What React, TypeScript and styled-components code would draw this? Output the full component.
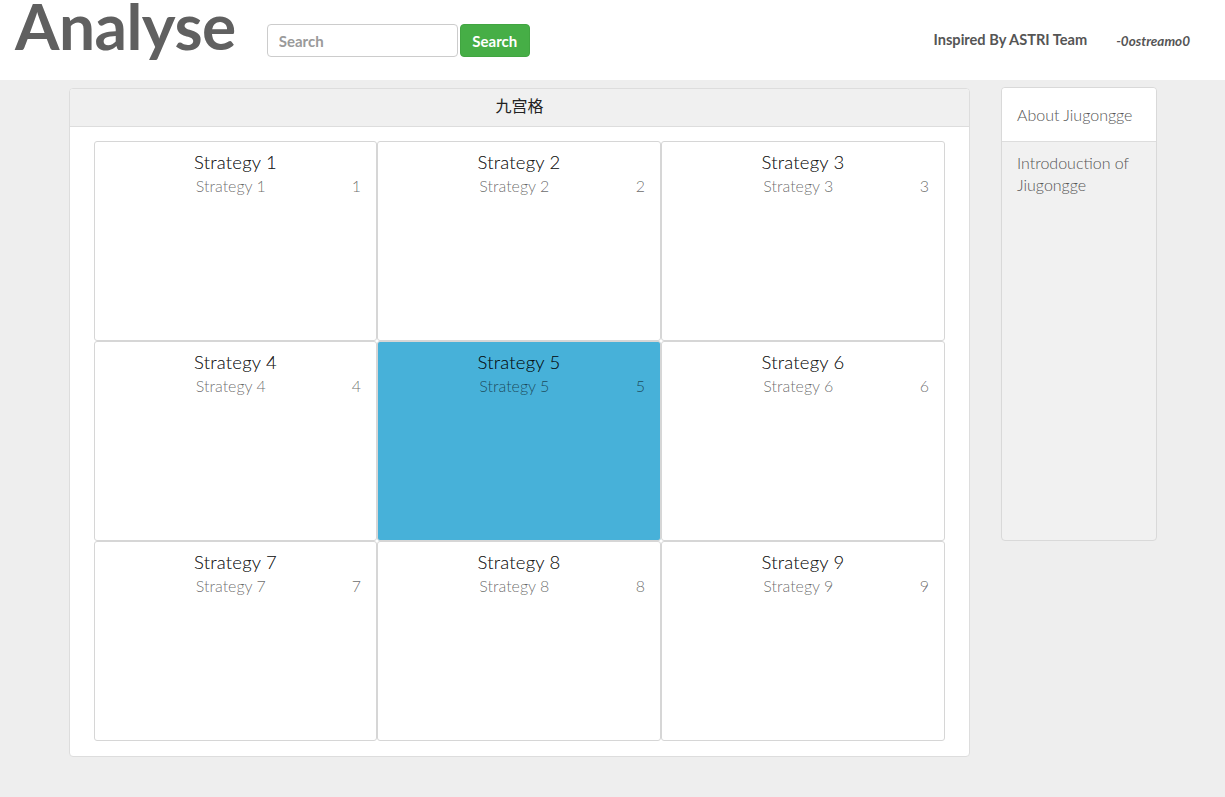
import React from "react";
import styled, { createGlobalStyle } from "styled-components";

const Global = createGlobalStyle`
  html, body { margin: 0; padding: 0; }
  body { background: #eeeeee; font-family: Lato, "Noto Sans CJK SC", sans-serif; color: #333; }
`;

const Page = styled.div`
  min-height: 797px;
  display: flex;
  flex-direction: column;
`;

const Header = styled.header`
  height: 80px;
  background: #fff;
  display: flex;
  align-items: flex-start;
  padding: 0 35px 0 15px;
  box-sizing: border-box;
`;

const Title = styled.h1`
  margin: 0;
  font-family: Lato, sans-serif;
  font-weight: 700;
  font-size: 64px;
  line-height: 52px;
  color: #606060;
  letter-spacing: -0.5px;
`;

const SearchForm = styled.form`
  display: flex;
  gap: 3px;
  margin: 24px 0 0 31px;
`;

const SearchInput = styled.input`
  width: 191px;
  height: 33px;
  box-sizing: border-box;
  border: 1px solid #cccccc;
  border-radius: 4px;
  padding: 0 11px;
  font-family: Lato, sans-serif;
  font-weight: 700;
  font-size: 15px;
  color: #555;
  &::placeholder { color: #9a9a9a; }
`;

const SearchButton = styled.button`
  width: 70px;
  height: 33px;
  margin-left: -1px;
  border: 1px solid #41a541;
  border-radius: 4px;
  background: #46ae46;
  color: #fff;
  font-family: Lato, sans-serif;
  font-weight: 700;
  font-size: 15px;
  cursor: pointer;
`;

const Spacer = styled.div`
  flex: 1;
`;

const Credit = styled.span<{ $italic?: boolean }>`
  margin-top: ${(p) => (p.$italic ? "32px" : "31px")};
  margin-left: ${(p) => (p.$italic ? "29px" : "0")};
  font-family: Lato, sans-serif;
  font-weight: 700;
  font-style: ${(p) => (p.$italic ? "italic" : "normal")};
  font-size: ${(p) => (p.$italic ? "13.5px" : "14.6px")};
  color: #555;
  line-height: 18px;
`;

const Body = styled.main`
  flex: 1;
  display: flex;
  align-items: flex-start;
  padding: 8px 0 40px 69px;
`;

const Panel = styled.section`
  width: 901px;
  background: #fff;
  border: 1px solid #dddddd;
  border-radius: 4px;
  box-sizing: border-box;
  overflow: hidden;
`;

const PanelHeading = styled.div`
  height: 38px;
  box-sizing: border-box;
  padding-bottom: 5px;
  background: #f0f0f0;
  border-bottom: 1px solid #dddddd;
  display: flex;
  align-items: center;
  justify-content: center;
  font-size: 16px;
  line-height: 20px;
  color: #222;
  font-family: "Noto Sans CJK SC", Lato, sans-serif;
`;

const PanelBody = styled.div`
  padding: 14px 25px 15px 24px;
`;

const Grid = styled.div`
  display: grid;
  grid-template-columns: 283px 284px 284px;
  grid-auto-rows: 200px;
`;

const Cell = styled.div<{ $active?: boolean }>`
  border: 1px solid #d6d6d6;
  border-radius: 3px;
  background: ${(p) => (p.$active ? "#47b1d9" : "#fff")};
  padding: 8px 15px;
  box-sizing: border-box;
`;

const CellTitle = styled.div`
  text-align: center;
  font-family: Lato, sans-serif;
  font-weight: 300;
  font-size: 18.5px;
  line-height: 24px;
  letter-spacing: 0.2px;
  color: rgba(0, 0, 0, 0.78);
  text-shadow: 0 0 0.4px rgba(0, 0, 0, 0.5);
`;

const CellSub = styled.div`
  text-align: center;
  font-family: Lato, sans-serif;
  font-weight: 300;
  font-size: 16px;
  line-height: 24px;
  color: rgba(0, 0, 0, 0.6);
`;

const Badge = styled.span`
  float: right;
`;

const Sidebar = styled.aside`
  width: 156px;
  height: 454px;
  margin-left: 31px;
  margin-top: -1px;
  border: 1px solid #d9d9d9;
  border-radius: 4px;
  background: #f1f1f1;
  box-sizing: border-box;
  overflow: hidden;
  display: flex;
  flex-direction: column;
`;

const SideHead = styled.div`
  height: 53px;
  background: #fff;
  border-bottom: 1px solid #dddddd;
  padding: 0 15px;
  display: flex;
  align-items: center;
  font-weight: 300;
  font-size: 16px;
  color: #555;
`;

const SideText = styled.div`
  padding: 10px 15px;
  font-weight: 300;
  font-size: 16px;
  line-height: 22px;
  color: #555;
`;

const items = Array.from({ length: 9 }, (_, i) => i + 1);

export default function App() {
  return (
    <Page>
      <Global />
      <Header>
        <Title>Analyse</Title>
        <SearchForm onSubmit={(e) => e.preventDefault()}>
          <SearchInput placeholder="Search" />
          <SearchButton type="submit">Search</SearchButton>
        </SearchForm>
        <Spacer />
        <Credit>Inspired By ASTRI Team</Credit>
        <Credit $italic>-0ostreamo0</Credit>
      </Header>
      <Body>
        <Panel>
          <PanelHeading>九宫格</PanelHeading>
          <PanelBody>
            <Grid>
              {items.map((n) => (
                <Cell key={n} $active={n === 5}>
                  <CellTitle>Strategy {n}</CellTitle>
                  <CellSub>
                    <Badge>{n}</Badge>
                    Strategy {n}
                  </CellSub>
                </Cell>
              ))}
            </Grid>
          </PanelBody>
        </Panel>
        <Sidebar>
          <SideHead>About Jiugongge</SideHead>
          <SideText>Introdouction of Jiugongge</SideText>
        </Sidebar>
      </Body>
    </Page>
  );
}
